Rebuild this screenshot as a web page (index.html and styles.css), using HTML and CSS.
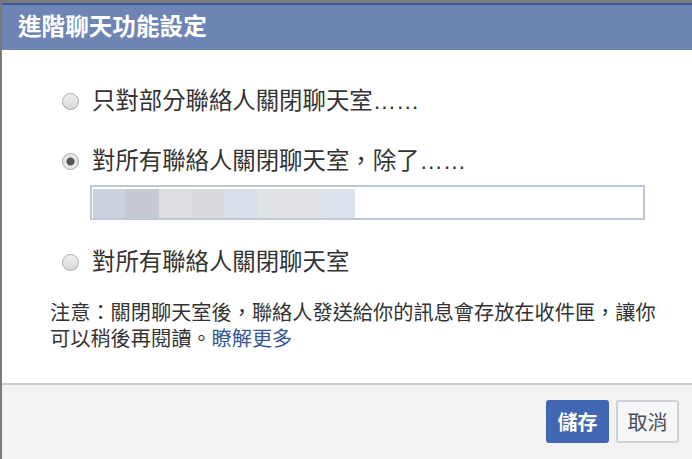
FILE: index.html
```html
<!DOCTYPE html>
<html lang="zh-Hant">
<head>
  <meta charset="UTF-8">
  <title>進階聊天功能設定</title>
  <link rel="stylesheet" href="styles.css">
</head>
<body>
  <div class="dialog">
    <div class="header">進階聊天功能設定</div>
    <div class="content">
      <label class="option">
        <input type="radio" name="mode">
        <span>只對部分聯絡人關閉聊天室……</span>
      </label>
      <label class="option second">
        <input type="radio" name="mode" checked>
        <span>對所有聯絡人關閉聊天室，除了……</span>
      </label>
      <div class="tokens">
        <div class="chips">
          <span class="chip" style="background:#cad2dd"></span>
          <span class="chip" style="background:#c5c9d1"></span>
          <span class="chip" style="background:#dcdde0"></span>
          <span class="chip" style="background:#d9dadd"></span>
          <span class="chip" style="background:#d9dfea"></span>
          <span class="chip wide" style="background:#e0e2e6"></span>
          <span class="chip" style="background:#dbe2ec"></span>
        </div>
      </div>
      <label class="option third">
        <input type="radio" name="mode">
        <span>對所有聯絡人關閉聊天室</span>
      </label>
      <p class="note">注意：關閉聊天室後，聯絡人發送給你的訊息會存放在收件匣，讓你可以稍後再閱讀。<a href="#">瞭解更多</a></p>
    </div>
    <div class="footer">
      <button class="btn primary">儲存</button>
      <button class="btn">取消</button>
    </div>
  </div>
</body>
</html>
```

FILE: styles.css
```css
html, body {
  margin: 0;
  height: 100%;
  overflow: hidden;
}
body {
  background: #7a7a7a;
  font-family: "Liberation Sans", "Noto Sans CJK TC", sans-serif;
  color: #333;
}
.dialog {
  margin: 3px 0 0 2px;
  border-top: 2px solid #3b5998;
  background: #fff;
  height: calc(100% - 5px);
  display: flex;
  flex-direction: column;
}
.header {
  background: #6d84b4;
  color: #fff;
  font-size: 23.6px;
  font-weight: bold;
  height: 45px;
  line-height: 45px;
  padding-left: 16px;
}
.content {
  height: 333px;
  padding: 36px 0 0 48px;
  box-sizing: border-box;
}
.option {
  display: flex;
  align-items: center;
  margin-left: 12px;
  height: 30px;
  font-size: 23.4px;
  line-height: 30px;
  color: #333;
}
.option.second {
  margin-top: 30px;
}
.option.third {
  margin-top: 27px;
}
.option input {
  appearance: none;
  -webkit-appearance: none;
  margin: 0 13px 0 0;
  width: 17px;
  height: 17px;
  border-radius: 50%;
  border: 1px solid #a9a9a9;
  background: linear-gradient(#f0f0f0, #d8d8d8);
  box-sizing: border-box;
  flex: none;
}
.option input:checked {
  background: radial-gradient(circle, #555 0 3.5px, #e6e6e6 4.5px);
}
.tokens {
  margin: 9px 0 0 40px;
  width: 555px;
  height: 35px;
  border: 2px solid #bdc7d8;
  box-sizing: border-box;
  padding: 2px 0 0 1px;
}
.chips {
  display: flex;
  height: 29px;
}
.chip {
  width: 33px;
  height: 29px;
}
.chip.wide {
  width: 64px;
}
.note {
  margin: 23px 0 0;
  max-width: 618px;
  font-size: 20.2px;
  line-height: 26px;
  color: #333;
}
.note a {
  display: inline-block;
  line-height: 26px;
  vertical-align: top;
  color: #365899;
  text-decoration: none;
}
.footer {
  flex: 1;
  background: #f2f2f2;
  border-top: 2px solid #cccccc;
  display: flex;
  justify-content: flex-end;
  align-items: flex-start;
  gap: 7px;
  padding: 15px 13px 0 0;
}
.btn {
  font-family: inherit;
  font-size: 20px;
  height: 43px;
  width: 63px;
  padding: 0;
  border: 2px solid #ced0d4;
  border-radius: 3px;
  background: #f6f7f9;
  color: #4b4f56;
  cursor: pointer;
}
.btn.primary {
  background: #4267b2;
  border-color: #4267b2;
  color: #fff;
  font-weight: bold;
}
```
